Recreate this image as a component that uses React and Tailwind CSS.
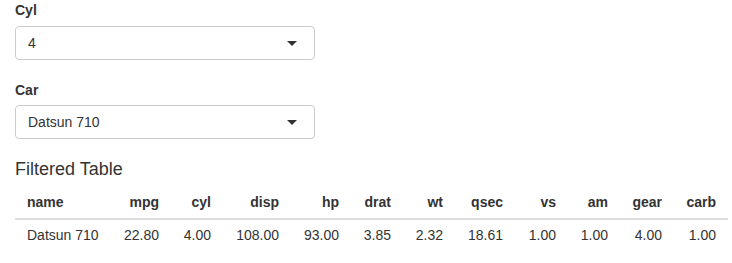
import React from "react";

const cols = [
  { k: "name", w: 96, left: true },
  { k: "mpg", w: 60 },
  { k: "cyl", w: 52 },
  { k: "disp", w: 68 },
  { k: "hp", w: 60 },
  { k: "drat", w: 52 },
  { k: "wt", w: 52 },
  { k: "qsec", w: 60 },
  { k: "vs", w: 53 },
  { k: "am", w: 52 },
  { k: "gear", w: 54 },
  { k: "carb", w: 54 },
];

const row = {
  name: "Datsun 710",
  mpg: "22.80",
  cyl: "4.00",
  disp: "108.00",
  hp: "93.00",
  drat: "3.85",
  wt: "2.32",
  qsec: "18.61",
  vs: "1.00",
  am: "1.00",
  gear: "4.00",
  carb: "1.00",
};

function Select({ label, value, gapClass }) {
  return (
    <div className="flex flex-col">
      <label className="block h-5 text-[14px] leading-5 font-bold">{label}</label>
      <div className={`${gapClass} w-[300px] h-[34px] border border-[#ccc] rounded-[4px] bg-white flex items-center justify-between pl-[12px] pr-[17px]`}>
        <span className="text-[14px] leading-5">{value}</span>
        <span className="w-0 h-0 border-x-[5px] border-x-transparent border-t-[5px] border-t-[#333]"></span>
      </div>
    </div>
  );
}

export default function App() {
  return (
    <div
      className="w-[732px] h-[263px] bg-white text-[#333] px-[15px] pt-0 overflow-hidden"
      style={{ fontFamily: '"Liberation Sans", Arial, sans-serif' }}
    >
      <Select label="Cyl" value="4" gapClass="mt-[6px]" />
      <div className="h-[20px]" />
      <Select label="Car" value="Datsun 710" gapClass="mt-[5px]" />
      <h4 className="mt-[20px] text-[18px] leading-[20px] font-normal">Filtered Table</h4>
      <table className="mt-[5px] border-collapse table-fixed w-[713px] text-[14px] leading-5">
        <colgroup>
          {cols.map((c) => (
            <col key={c.k} style={{ width: c.w }} />
          ))}
        </colgroup>
        <thead>
          <tr className="border-b-2 border-[#ddd]">
            {cols.map((c) => (
              <th
                key={c.k}
                className={`px-[12px] pt-[8px] pb-[6px] font-bold ${c.left ? "text-left" : "text-right"}`}
              >
                {c.k}
              </th>
            ))}
          </tr>
        </thead>
        <tbody>
          <tr>
            {cols.map((c) => (
              <td
                key={c.k}
                className={`px-[12px] pt-[5px] pb-[8px] whitespace-nowrap ${c.left ? "text-left" : "text-right"}`}
              >
                {row[c.k]}
              </td>
            ))}
          </tr>
        </tbody>
      </table>
    </div>
  );
}
